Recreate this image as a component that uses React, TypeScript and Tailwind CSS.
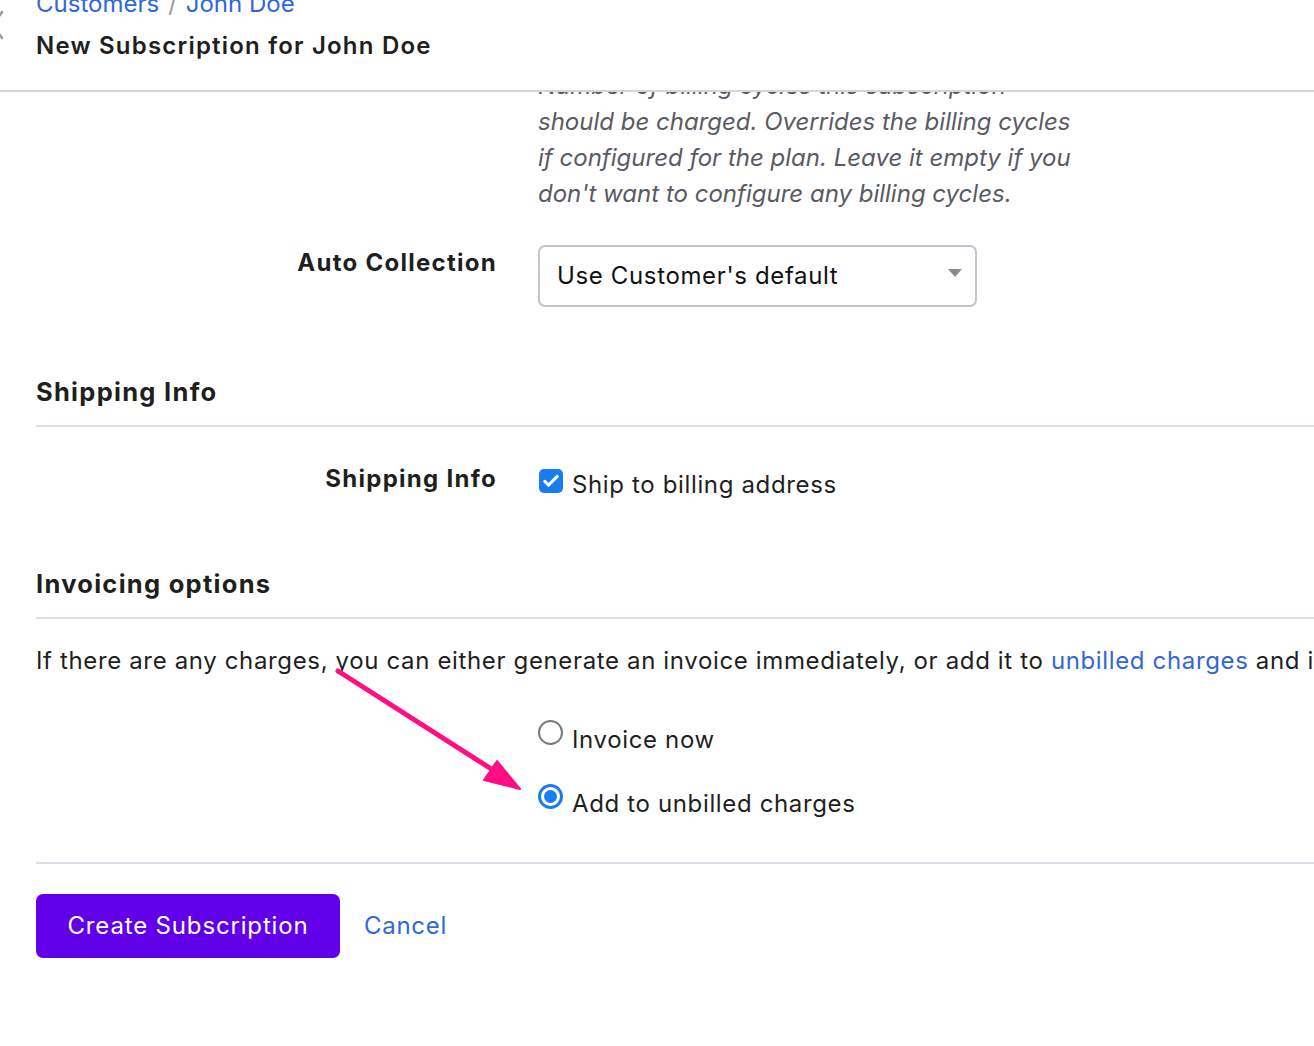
import React from "react";

const font = { fontFamily: "Inter, 'Noto Sans', sans-serif" };

function Checkbox() {
	return (
		<span className="mt-[2px] flex h-[24px] w-[24px] shrink-0 items-center justify-center rounded-[5px] bg-[#1a7cf5]">
			<svg viewBox="0 0 24 24" className="h-[20px] w-[20px]" fill="none" stroke="white" strokeWidth="3.6" strokeLinecap="round" strokeLinejoin="round">
				<path d="M4.5 12.5l4.5 4.5L19.5 6.5" />
			</svg>
		</span>
	);
}

function Radio({ checked }: { checked?: boolean }) {
	if (checked) {
		return (
			<span className="mt-[1px] flex h-[25px] w-[25px] shrink-0 items-center justify-center rounded-full border-[3px] border-[#1a7cf5] bg-white">
				<span className="h-[13px] w-[13px] rounded-full bg-[#1a7cf5]" />
			</span>
		);
	}
	return <span className="mt-[1px] h-[25px] w-[25px] shrink-0 rounded-full border-[2px] border-[#7a7a7a] bg-white" />;
}

function SectionHeading({ title }: { title: string }) {
	return (
		<div className="border-b-2 border-[#dcdfea] pb-[17px]">
			<h2 className="text-[25.5px] leading-[32px] font-bold tracking-[0.05em] text-[#1f1f1f]">{title}</h2>
		</div>
	);
}

export default function App() {
	return (
		<div className="relative h-[1046px] w-[1314px] overflow-hidden bg-white text-[#1f1f1f]" style={font}>
			<header className="relative z-10 flex h-[92px] flex-col border-b-2 border-[#d6d6d6] bg-white pl-[36px]">
				<svg className="absolute left-[-9px] top-[10px] h-[30px] w-[14px]" viewBox="0 0 14 30" fill="none" stroke="#9a9a9a" strokeWidth="2.5" strokeLinecap="round">
					<path d="M11 2L2 15l9 13" />
				</svg>
				<div className="mt-[-12px] text-[24px] leading-[32px] text-[#3068d8]">
					<span>Customers</span>
					<span className="mx-[9px] text-[#9a9a9a]">/</span>
					<span>John Doe</span>
				</div>
				<h1 className="mt-[10px] text-[24px] leading-[32px] font-semibold tracking-[0.05em] text-[#1f1f1f]">
					New Subscription for John Doe
				</h1>
			</header>

			<main className="pl-[36px] tracking-[0.04em]">
				<div className="grid grid-cols-[459px_1fr] gap-x-[43px]">
					<div />
					<p className="mt-[-24px] w-[540px] text-[24px] leading-[36px] italic tracking-normal text-[#5a5a64]">
						Number of billing cycles this subscription should be charged. Overrides the billing cycles if configured for the plan. Leave it empty if you don't want to configure any billing cycles.
					</p>
				</div>

				<div className="mt-[33px] grid grid-cols-[459px_1fr] items-start gap-x-[43px]">
					<label className="mr-[-2px] text-right text-[24px] leading-[36px] font-bold tracking-[0.053em]">Auto Collection</label>
					<div className="flex h-[62px] w-[439px] items-center justify-between rounded-[7px] border-2 border-[#c4c4ce] pl-[17px] pr-[13px]">
						<span className="text-[24px] leading-[36px] text-[#111]">Use Customer's default</span>
						<svg viewBox="0 0 14 8" className="mb-[6px] h-[8px] w-[14px]">
							<path d="M0 0h14L7 8z" fill="#8c8c8c" />
						</svg>
					</div>
				</div>

				<div className="mt-[69px]">
					<SectionHeading title="Shipping Info" />
				</div>

				<div className="mt-[34px] grid grid-cols-[459px_1fr] items-start gap-x-[43px]">
					<label className="mr-[-2px] text-right text-[24px] leading-[36px] font-bold tracking-[0.053em]">Shipping Info</label>
					<div className="mt-[6px] flex items-start gap-[9px] pl-[1px]">
						<Checkbox />
						<span className="text-[24px] leading-[36px]">Ship to billing address</span>
					</div>
				</div>

				<div className="mt-[65px]">
					<SectionHeading title="Invoicing options" />
				</div>

				<p className="mt-[24px] whitespace-nowrap text-[24px] leading-[36px]">
					If there are any charges, you can either generate an invoice immediately, or add it to{" "}
					<a className="text-[#3068d8]">unbilled charges</a> and invoice them later.
				</p>

				<div className="mt-[40px] grid grid-cols-[459px_1fr] gap-x-[43px]">
					<div />
					<div className="flex flex-col gap-[25px]">
						<div className="flex items-start gap-[9px]">
							<Radio />
							<span className="mt-[3px] text-[24px] leading-[36px]">Invoice now</span>
						</div>
						<div className="flex items-start gap-[9px]">
							<Radio checked />
							<span className="mt-[3px] text-[24px] leading-[36px]">Add to unbilled charges</span>
						</div>
					</div>
				</div>

				<div className="mt-[40px] border-t-2 border-[#dcdfea]" />

				<div className="mt-[30px] flex items-center gap-[24px]">
					<button className="h-[64px] w-[304px] rounded-[7px] bg-[#6200ea] text-[24px] tracking-[0.035em] text-white">
						Create Subscription
					</button>
					<a className="text-[24px] tracking-[0.03em] text-[#3068d8]">Cancel</a>
				</div>
			</main>

			<svg className="pointer-events-none absolute left-0 top-0 h-[1046px] w-[1314px]" viewBox="0 0 1314 1046">
				<line x1="338" y1="671" x2="496" y2="772" stroke="#ff0f82" strokeWidth="5" strokeLinecap="round" />
				<path d="M520 789L484 780L497 761z" fill="#ff0f82" stroke="#ff0f82" strokeWidth="2" strokeLinejoin="round" />
			</svg>
		</div>
	);
}
